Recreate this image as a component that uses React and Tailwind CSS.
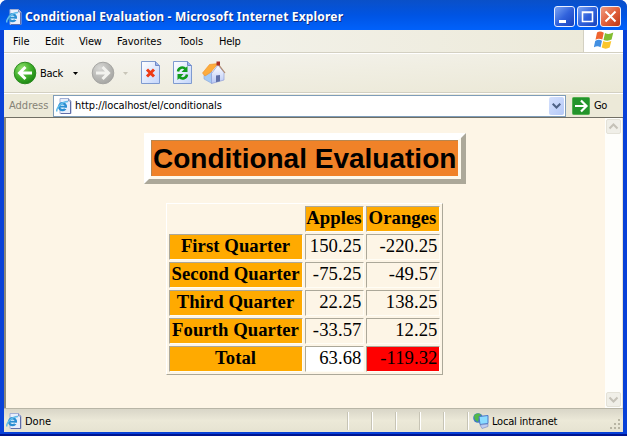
const rows = [
  ["First Quarter", "150.25", "-220.25"],
  ["Second Quarter", "-75.25", "-49.57"],
  ["Third Quarter", "22.25", "138.25"],
  ["Fourth Quarter", "-33.57", "12.25"],
];

const inset = "border border-t-[#aca899] border-l-[#aca899] border-r-[#fffdf5] border-b-[#fffdf5]";

function PageIcon({ className }) {
  return (
    <svg className={className} viewBox="0 0 16 16">
      <path d="M4 .5h8.500L15 3v12.500H4z" fill="#e9effc" stroke="#a3b0d6" />
      <path d="M12.500.5V3H15" fill="#c4d0ee" stroke="#8794bd" />
      <path d="M14.500 3.500v12H5" fill="none" stroke="#5f6da8" />
      <circle cx="6.500" cy="8.700" r="3.400" fill="#e5f6ff" stroke="#2b8ed2" strokeWidth="2.400" />
      <path d="M4 8.700h7" stroke="#2b8ed2" strokeWidth="1.800" />
      <path d="M8.500 10.400h3.500" stroke="#e9effc" strokeWidth="1.400" />
      <path d="M1 13.500C-.5 10 6 3.500 12 3.600" fill="none" stroke="#63bdea" strokeWidth="1.500" />
    </svg>
  );
}

function RoundArrow({ forward }) {
  return (
    <svg className="size-6 shrink-0" viewBox="0 0 24 24">
      <defs>
        <radialGradient id={forward ? "fw" : "bk"} cx=".35" cy=".28" r=".8">
          <stop offset="0" stopColor={forward ? "#d8d8d5" : "#8ee06b"} />
          <stop offset=".55" stopColor={forward ? "#b9b9b6" : "#3fae2a"} />
          <stop offset="1" stopColor={forward ? "#a3a3a0" : "#178010"} />
        </radialGradient>
      </defs>
      <circle cx="12" cy="12" r="10.800" fill={forward ? "url(#fw)" : "url(#bk)"} stroke={forward ? "#a5a5a2" : "#2c8a20"} />
      <path
        d={forward ? "M5 12h12M11.500 6l6 6-6 6" : "M19 12H7M12.500 6l-6 6 6 6"}
        fill="none" stroke={forward ? "#f2f2ee" : "#fff"} strokeWidth="3"
      />
    </svg>
  );
}

function Sheet({ children }) {
  return (
    <svg className="h-6 w-5 shrink-0" viewBox="0 0 20 24">
      <defs>
        <linearGradient id="sheet" x1="0" y1="0" x2="1" y2="1">
          <stop offset="0" stopColor="#fff" />
          <stop offset="1" stopColor="#c3d5fb" />
        </linearGradient>
      </defs>
      <path d="M.5.5h14l4 4v18H.5z" fill="url(#sheet)" stroke="#7f9bd0" />
      <path d="M14.500.5v4h4" fill="#9db6ec" stroke="#7088c4" />
      {children}
    </svg>
  );
}

function House() {
  return (
    <svg className="h-6 w-[25px] shrink-0" viewBox="0 0 25 24">
      <defs>
        <linearGradient id="wall" x1="0" y1="0" x2="0" y2="1">
          <stop offset="0" stopColor="#fff" />
          <stop offset="1" stopColor="#b9c8f5" />
        </linearGradient>
      </defs>
      <path d="M3 12v6l8 4.500V11L9 9z" fill="#a5caf3" stroke="#86a3dc" strokeWidth=".6" />
      <path d="M10.500 12.500L17 4l6 7.500V19l-12.500 3.500z" fill="url(#wall)" stroke="#8f9dd6" strokeWidth=".7" />
      <path d="M1.500 12L8.500 3.500 17 2.500 9.500 11.500l-5.500 3.500z" fill="#fdac3c" stroke="#ee8f25" strokeWidth=".6" />
      <path d="M17 2.800L24 12" stroke="#b08a70" strokeWidth="1.200" />
      <path d="M15.500.5h3.500v4h-3.500z" fill="#a92f25" />
      <path d="M15 14.500l4-.6v6.300l-4 1.100z" fill="#6070a8" />
    </svg>
  );
}

function WindowsFlag() {
  return (
    <svg className="h-[18px] w-5" viewBox="0 0 20 18">
      <path d="M3 1.500C5.500-.3 7.500.5 9.800 1.700L8.300 8.500C6 7.500 4 7.200 1.500 8.700z" fill="#ef6430" />
      <path d="M11 2c2.500 1.300 5 1.200 8.300-.4l-1.700 7C15 10 12 10 9.500 8.900z" fill="#83bd31" />
      <path d="M1.200 9.900c2.500-1.500 4.600-1.300 6.800-.2l-1.500 6.500C4.300 15 2.300 15-.2 16.400z" fill="#428fe2" />
      <path d="M9.200 10.100c2.500 1.200 5 1.200 8.100-.2l-1.600 6.700c-3 1.500-5.500 1.300-8-.1z" fill="#fbc62b" />
    </svg>
  );
}

function CaptionButton({ close, children }) {
  return (
    <div className={"size-[21px] shrink-0 rounded-[3px] border border-[#e9efff] bg-linear-to-br " + (close ? "from-[#ee9a80] via-[#e2603c] to-[#bb3612]" : "from-[#7ba3f3] via-[#3162dc] to-[#1741bd]")}>
      <svg className="size-[19px]" viewBox="0 0 19 19">{children}</svg>
    </div>
  );
}

function ScrollButton({ d }) {
  return (
    <div className="h-[15px] w-[15px] rounded-[2px] border border-[#e4e2d8] bg-[#f0efe8]">
      <svg className="size-[13px]" viewBox="0 0 13 13"><path d={d} fill="none" stroke="#c5c2b8" strokeWidth="2" /></svg>
    </div>
  );
}

export default function App() {
  return (
    <div className="flex h-[436px] w-[627px] flex-col overflow-hidden rounded-t-[7px] bg-[#0841d8] font-['DejaVu_Sans_Condensed','DejaVu_Sans',sans-serif] text-[11px] leading-[14px] text-black">
      <header className="flex h-[30px] shrink-0 items-center bg-linear-to-b from-[#0a50c8] via-[#0054e3] to-[#0061fb] pt-[3px] pr-[6px] pl-[6px]">
        <PageIcon className="mr-[3px] size-4 shrink-0" />
        <h1 className="grow pt-px whitespace-nowrap font-['Noto_Sans',sans-serif] text-[12px] font-bold tracking-[0.17px] text-white [text-shadow:1px_1px_0_#0a2e87]">
          Conditional Evaluation - Microsoft Internet Explorer
        </h1>
        <div className="flex gap-[2px]">
          <CaptionButton><path d="M4 13h7v3H4z" fill="#fff" /></CaptionButton>
          <CaptionButton><path d="M4.500 5h10v9.500h-10zM4 5.500h11" fill="none" stroke="#fff" strokeWidth="1.600" /></CaptionButton>
          <CaptionButton close><path d="M4.500 4.500l10 10M14.500 4.500l-10 10" stroke="#fff" strokeWidth="2" /></CaptionButton>
        </div>
      </header>

      <div className="mr-1 ml-1 flex min-h-0 grow flex-col bg-[#ece9d8]">
        <nav className="flex h-[23px] shrink-0 border-b border-[#d3d0c2] bg-linear-to-r from-[#f6f6f3] to-[#ece9d8] pl-[9px]">
          <span className="w-8 pt-[5px]">File</span>
          <span className="w-[34px] pt-[5px]">Edit</span>
          <span className="w-[38px] pt-[5px] tracking-[-0.2px]">View</span>
          <span className="w-[62px] pt-[5px]">Favorites</span>
          <span className="w-[40px] pt-[5px]">Tools</span>
          <span className="grow pt-[5px] tracking-[-0.3px]">Help</span>
          <div className="flex w-[40px] justify-center border-l border-[#d3d0c2] bg-white pt-[1px]"><WindowsFlag /></div>
        </nav>

        <div className="flex h-10 shrink-0 items-center border-t border-b border-t-white border-b-[#d3d0c2] bg-linear-to-br from-[#f5f4f0] via-[#f0eee2] to-[#ebe8d6] pl-[9px]">
          <RoundArrow />
          <span className="ml-[3px] w-[24px] pt-px tracking-[-0.3px]">Back</span>
          <svg className="ml-[9px] h-[3px] w-[5px]" viewBox="0 0 5 3"><path d="M0 0h5L2.500 3z" /></svg>
          <div className="ml-[13px]"><RoundArrow forward /></div>
          <svg className="ml-[8px] h-[3px] w-[5px]" viewBox="0 0 5 3"><path d="M0 0h5L2.500 3z" fill="#c8c5b8" /></svg>
          <div className="ml-[13px] flex items-center">
            <Sheet><path d="M6 8.500l7 7M13 8.500l-7 7" stroke="#ee3a14" strokeWidth="3" /></Sheet>
            <div className="ml-3">
              <Sheet>
                <path d="M5 10.500c.5-4 5-5 7.500-2.500M14 13.500c-.5 4-5 5-7.500 2.500" fill="none" stroke="#119d1d" strokeWidth="2.500" />
                <path d="M14.500 5v6h-6zM4.500 19v-6h6z" fill="#119d1d" />
              </Sheet>
            </div>
            <div className="ml-[8px]"><House /></div>
          </div>
        </div>

        <div className="flex h-[24px] shrink-0 items-center border-t border-white pl-[5px]">
          <span className="w-[44px] text-[11px] text-[#858276]">Address</span>
          <div className="flex h-[22px] w-[513px] items-center border border-[#7f9db9] bg-white pr-[1px] pl-[2px]">
            <PageIcon className="size-[16px] shrink-0" />
            <span className="ml-[3px] grow pt-px whitespace-nowrap tracking-[-0.1px]">http://localhost/el/conditionals</span>
            <div className="flex h-[18px] w-[15px] items-center justify-center rounded-[2px] bg-linear-to-br from-[#d5e1fd] to-[#b5c9f7]">
              <svg className="h-[6px] w-[9px]" viewBox="0 0 9 6"><path d="M.7.7l3.800 3.800L8.300.7" fill="none" stroke="#4d6185" strokeWidth="2" /></svg>
            </div>
          </div>
          <svg className="ml-[6px] size-[18px]" viewBox="0 0 18 18">
            <rect x=".5" y=".5" width="17" height="17" rx="1" fill="#23942b" stroke="#52ae51" />
            <path d="M3 9h11M9 3.500L14.500 9 9 14.500" fill="none" stroke="#fff" strokeWidth="2.200" />
          </svg>
          <span className="ml-[4px] tracking-[-0.5px]">Go</span>
        </div>

        <div className="flex min-h-0 grow border-t border-l-2 border-t-[#716f64] border-l-[#8a887b] bg-[#fdf5e6]">
          <main className="flex grow flex-col items-center pt-[15px] pr-px">
            <div className="h-[51px] w-[322px] border-[5px] border-t-white border-l-white border-r-[#aca899] border-b-[#aca899]">
              <h2 className="h-[41px] border-t-2 border-r-[3px] border-b-[3px] border-l-2 border-t-white border-r-[#fdf9ec] border-b-[#fdf9ec] border-l-white">
                <span className="flex h-9 items-center border-t border-l border-[#b8864f] bg-[#f08228] pl-px font-['Liberation_Sans',sans-serif] text-[28px] leading-[36px] font-bold whitespace-nowrap">Conditional Evaluation</span>
              </h2>
            </div>

            <table className="mt-[19px] mr-[2px] h-[172px] w-[277px] table-fixed border-separate border-spacing-[2px] border border-t-white border-l-white border-r-[#aca899] border-b-[#aca899] font-['Liberation_Serif',serif] text-[18.7px] leading-[22px] tracking-[0.06px]">
              <colgroup><col className="w-[134px]" /><col className="w-[59px]" /><col className="w-[74px]" /></colgroup>
              <tbody>
                <tr>
                  <td className="h-[26px] p-0" />
                  <th className={inset + " bg-[#ffaa00] p-0 pb-[2px]"}>Apples</th>
                  <th className={inset + " bg-[#ffaa00] p-0 pb-[2px]"}>Oranges</th>
                </tr>
                {rows.map(([name, apples, oranges]) => (
                  <tr key={name}>
                    <th className={inset + " h-[26px] bg-[#ffaa00] p-0 pb-[2px] whitespace-nowrap"}>{name}</th>
                    <td className={inset + " p-0 pr-px pb-[2px] text-right"}>{apples}</td>
                    <td className={inset + " p-0 pr-px pb-[2px] text-right"}>{oranges}</td>
                  </tr>
                ))}
                <tr>
                  <th className={inset + " h-[26px] bg-[#ffaa00] p-0 pb-[2px]"}>Total</th>
                  <td className={inset + " bg-white p-0 pr-px pb-[2px] text-right"}>63.68</td>
                  <td className={inset + " bg-[#ff0000] p-0 pr-px pb-[2px] text-right"}>-119.32</td>
                </tr>
              </tbody>
            </table>
          </main>
          <div className="flex w-[18px] flex-col items-center justify-between border-r border-[#e5e2d5] bg-[#fefefb] py-[1px]">
            <ScrollButton d="M2.500 8.500l4-4 4 4" />
            <ScrollButton d="M2.500 4.500l4 4 4-4" />
          </div>
        </div>

        <footer className="flex h-[24px] shrink-0 items-center border-t border-[#b8b5a6] bg-linear-to-b from-[#d9d6c8] via-[#ece9d8] to-[#e6e3d1] pt-px pl-[2px]">
          <PageIcon className="size-4" />
          <span className="ml-[3px] grow pt-[2px]">Done</span>
          <div className="flex h-[18px]">
            <i className="w-6 border-l border-[#c7c4b5] shadow-[inset_1px_0_#fff]" />
            <i className="w-6 border-l border-[#c7c4b5] shadow-[inset_1px_0_#fff]" />
            <i className="w-6 border-l border-[#c7c4b5] shadow-[inset_1px_0_#fff]" />
            <i className="w-6 border-l border-[#c7c4b5] shadow-[inset_1px_0_#fff]" />
            <i className="w-6 border-l border-[#c7c4b5] shadow-[inset_1px_0_#fff]" />
            <div className="flex w-[156px] items-center border-l border-[#c7c4b5] pl-[5px] shadow-[inset_1px_0_#fff]">
              <svg className="size-4" viewBox="0 0 16 16">
                <circle cx="5" cy="5" r="4.800" fill="#3f78c9" />
                <path d="M1 3c2-3 5-3 7-1L6 5 5 9 2 7z" fill="#52b848" />
                <path d="M6 3.500l9-1v8l-8 1z" fill="#8bdcff" stroke="#4a76c8" />
                <path d="M7 12l8-1v2.500L9 15.500z" fill="#bfcdf1" stroke="#7387bd" strokeWidth=".6" />
              </svg>
              <span className="ml-[3px] grow pt-[2px] whitespace-nowrap tracking-[-0.2px]">Local intranet</span>
              <svg className="mt-[6px] mr-[2px] size-[11px]" viewBox="0 0 11 11">
                <path d="M8 0h2v2H8zM4 4h2v2H4zM8 4h2v2H8zM0 8h2v2H0zM4 8h2v2H4zM8 8h2v2H8z" fill="#b8b5a3" />
              </svg>
            </div>
          </div>
        </footer>
      </div>
      <div className="h-1 shrink-0 border-b-2 border-[#001590] bg-[#0841d8]" />
    </div>
  );
}
